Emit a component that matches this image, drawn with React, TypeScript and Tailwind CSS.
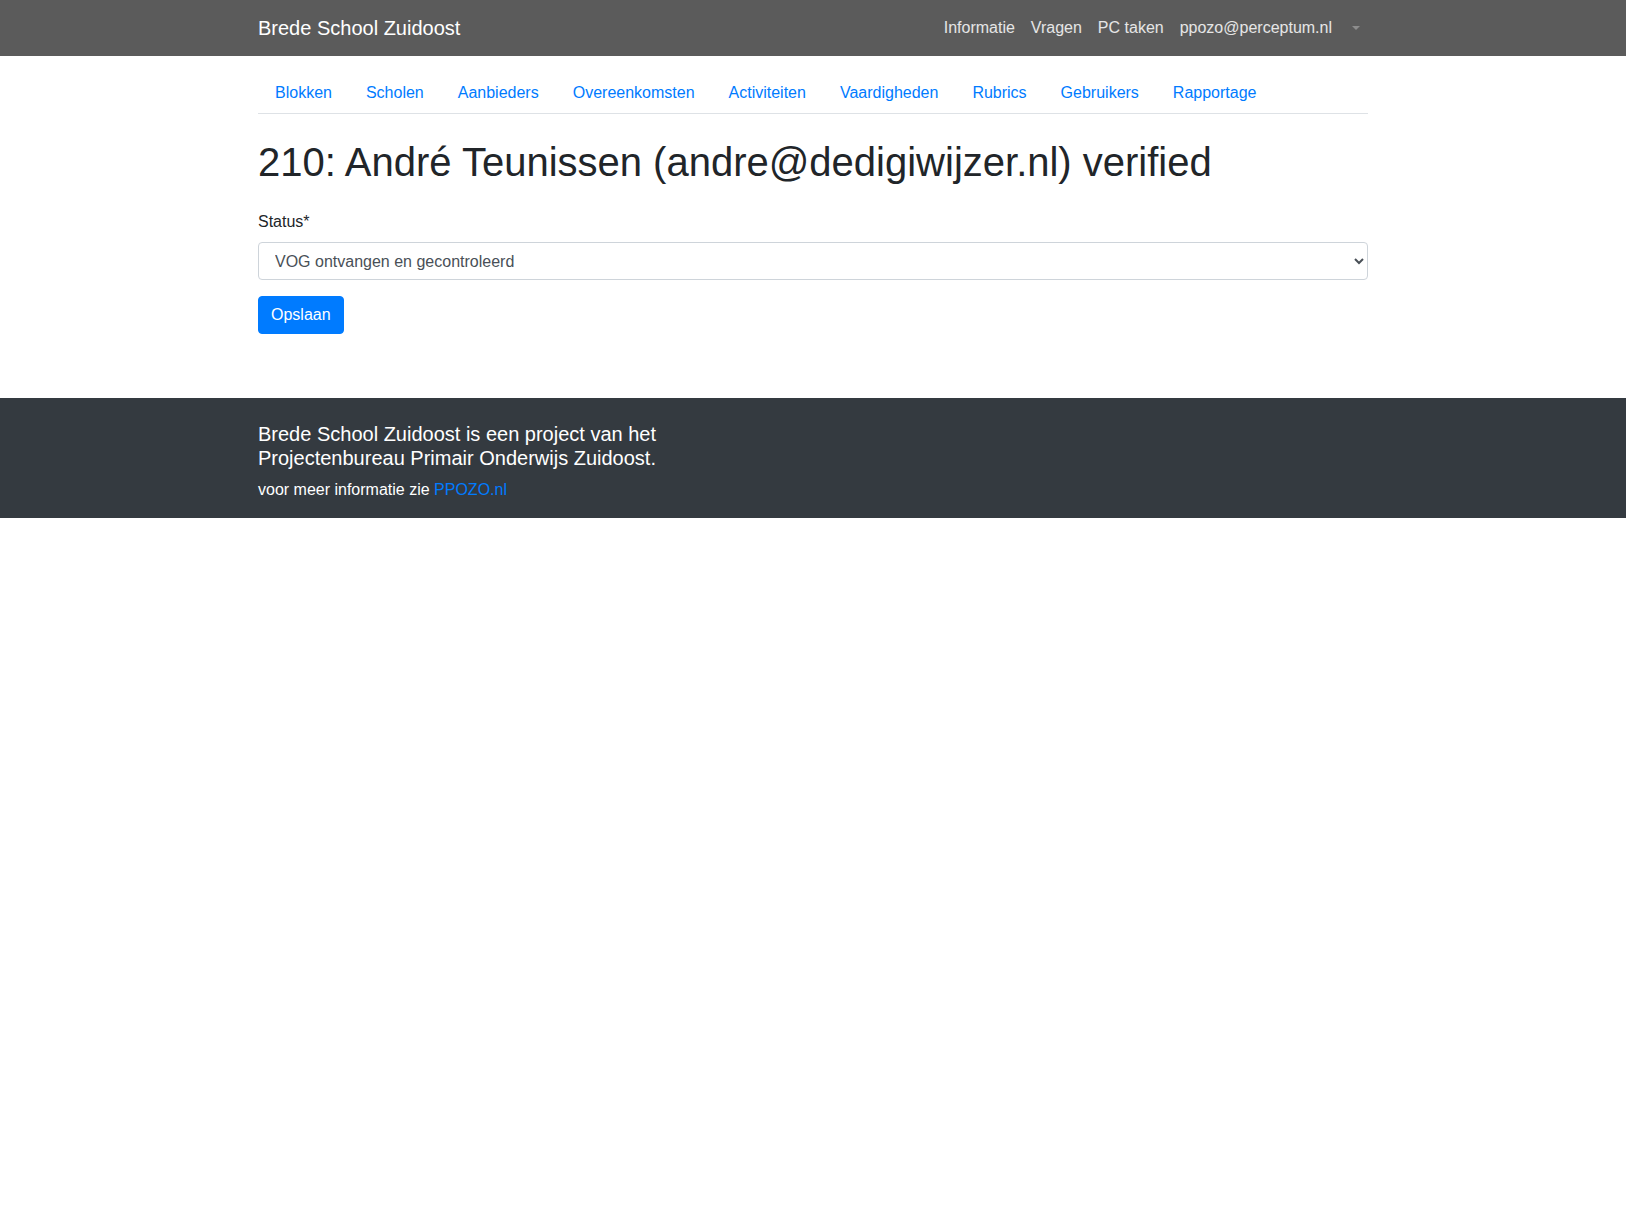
const font = { fontFamily: '"Liberation Sans", Arial, sans-serif' };

const tabs = [
  "Blokken",
  "Scholen",
  "Aanbieders",
  "Overeenkomsten",
  "Activiteiten",
  "Vaardigheden",
  "Rubrics",
  "Gebruikers",
  "Rapportage",
];

function Navbar() {
  return (
    <nav className="h-14 bg-[#5b5b5b]">
      <div className="mx-auto flex h-full max-w-[1140px] items-center justify-between px-[15px]">
        <a className="text-xl leading-[30px] text-white" href="#">
          Brede School Zuidoost
        </a>
        <ul className="flex items-center text-base leading-6 text-white/85">
          <li>
            <a className="block px-2 py-2" href="#">Informatie</a>
          </li>
          <li>
            <a className="block px-2 py-2" href="#">Vragen</a>
          </li>
          <li>
            <a className="block px-2 py-2" href="#">PC taken</a>
          </li>
          <li>
            <a className="block px-2 py-2" href="#">ppozo@perceptum.nl</a>
          </li>
          <li>
            <a className="flex h-10 items-center pl-[12px] pr-2" href="#">
              <span className="inline-block h-0 w-0 border-x-[4.8px] border-t-[4.8px] border-x-transparent border-t-[#8d8d8d]" />
            </a>
          </li>
        </ul>
      </div>
    </nav>
  );
}

function Tabs() {
  return (
    <ul className="mt-4 flex border-b border-[#dee2e6]">
      {tabs.map((t) => (
        <li key={t} className="-mb-px">
          <a
            className="block border border-transparent px-4 py-2 text-base leading-6 text-[#007bff]"
            href="#"
          >
            {t}
          </a>
        </li>
      ))}
    </ul>
  );
}

export default function App() {
  return (
    <div className="min-h-[1219px] bg-white text-[#212529]" style={font}>
      <Navbar />
      <main className="mx-auto max-w-[1140px] px-[15px] pb-16">
        <Tabs />
        <h1 className="mt-6 mb-2 text-[40px] leading-[48px] font-normal">
          210: André Teunissen (andre@dedigiwijzer.nl) verified
        </h1>
        <form className="pt-4">
          <div className="mb-4">
            <label className="mb-2 block text-base leading-6">Status*</label>
            <select
              className="block h-[38px] w-full rounded-[4px] border border-[#ced4da] bg-white px-3 text-base text-[#495057]"
              defaultValue="vog"
              style={font}
            >
              <option value="new">Nieuw</option>
              <option value="vog">VOG ontvangen en gecontroleerd</option>
            </select>
          </div>
          <button
            type="button"
            className="h-[38px] rounded-[4px] border border-[#007bff] bg-[#007bff] px-3 text-base leading-6 text-white"
          >
            Opslaan
          </button>
        </form>
      </main>
      <footer className="bg-[#343a40] pt-6 pb-4 text-white">
        <div className="mx-auto max-w-[1140px] px-[15px]">
          <h5 className="mb-2 text-xl leading-6 font-normal">
            Brede School Zuidoost is een project van het
            <br />
            Projectenbureau Primair Onderwijs Zuidoost.
          </h5>
          <p className="text-base leading-6">
            voor meer informatie zie{" "}
            <a className="text-[#007bff]" href="#">
              PPOZO.nl
            </a>
          </p>
        </div>
      </footer>
    </div>
  );
}
